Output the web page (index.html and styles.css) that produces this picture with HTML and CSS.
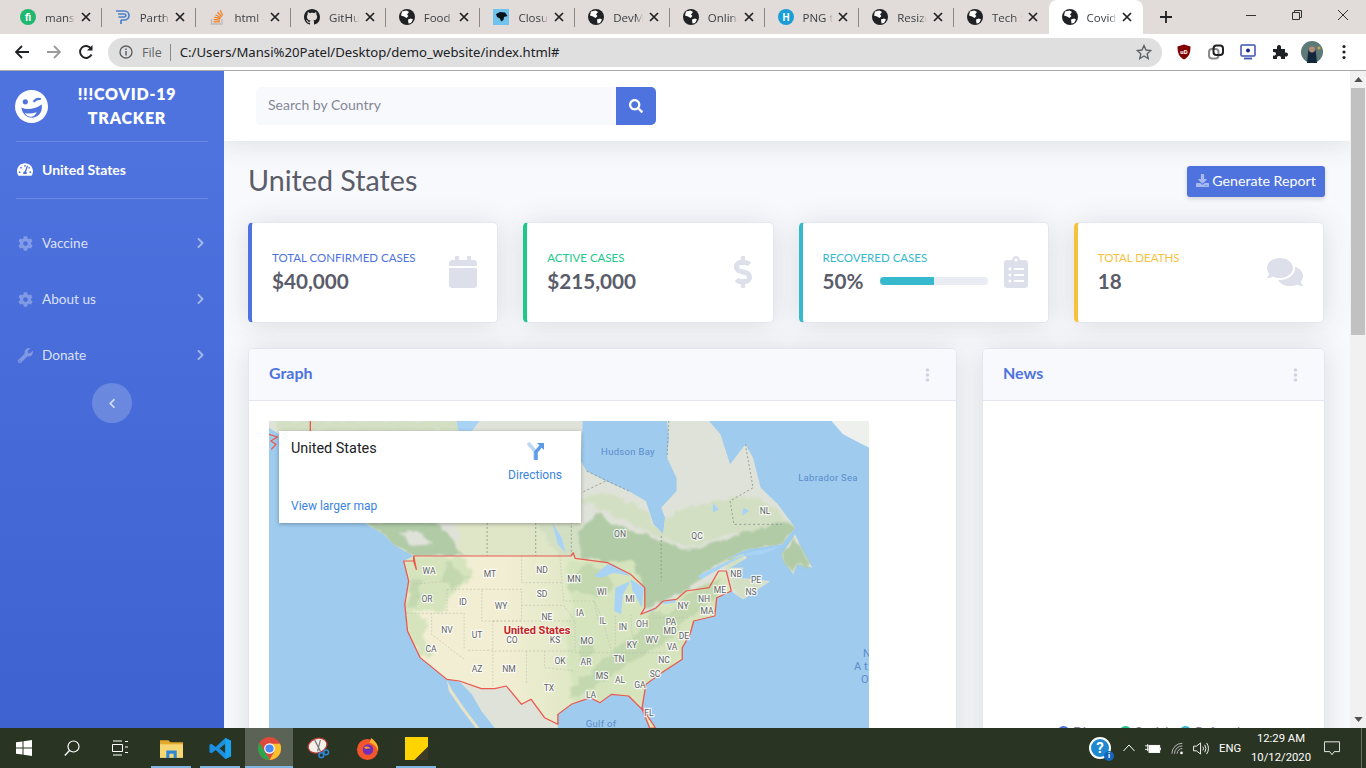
FILE: index.html
```html
<!DOCTYPE html>
<html lang="en">
<head>
<meta charset="utf-8">
<title>Covid-19 Tracker</title>
<link rel="stylesheet" href="styles.css">
</head>
<body>
<svg class="defs" aria-hidden="true">
  <symbol id="globe" viewBox="0 0 16 16"><circle cx="8" cy="8" r="8" fill="#202124"/><path d="M3 2.5 7.5 1.5 10 3 8 5.5 9.5 7 7.5 9 5 7.5 2 6.5ZM9 10.500 12 9.500 14 10.500 12 14 9.500 14.500Z" fill="#fff"/></symbol>
  <symbol id="x" viewBox="0 0 10 10"><path d="M1 1 9 9M9 1 1 9" stroke="#202124" stroke-width="1.700" fill="none"/></symbol>
  <symbol id="cog" viewBox="0 0 512 512"><path d="M487.4 315.7l-42.6-24.6c4.3-23.2 4.3-47 0-70.2l42.6-24.6c4.9-2.8 7.1-8.6 5.500-14-11.100-35.600-30-67.800-54.700-94.600-3.800-4.100-10-5.100-14.800-2.300L380.800 110c-17.900-15.400-38.500-27.300-60.800-35.100V25.800c0-5.600-3.900-10.500-9.400-11.700-36.700-8.200-74.300-7.800-109.200 0-5.500 1.200-9.400 6.100-9.400 11.700V75c-22.200 7.900-42.800 19.800-60.800 35.100L88.700 85.500c-4.900-2.800-11-1.900-14.800 2.300-24.700 26.700-43.600 58.900-54.700 94.600-1.700 5.400.6 11.200 5.500 14L67.300 221c-4.300 23.200-4.300 47 0 70.200l-42.600 24.600c-4.900 2.800-7.100 8.600-5.500 14 11.100 35.600 30 67.800 54.700 94.600 3.800 4.100 10 5.100 14.800 2.300l42.600-24.600c17.900 15.400 38.500 27.300 60.800 35.100v49.200c0 5.600 3.900 10.500 9.400 11.700 36.700 8.200 74.300 7.800 109.200 0 5.500-1.200 9.400-6.100 9.400-11.700v-49.200c22.200-7.900 42.800-19.800 60.800-35.100l42.600 24.600c4.900 2.800 11 1.900 14.800-2.300 24.700-26.700 43.600-58.900 54.700-94.600 1.500-5.500-.7-11.300-5.600-14.100zM256 336c-44.100 0-80-35.900-80-80s35.900-80 80-80 80 35.900 80 80-35.900 80-80 80z"/></symbol>
  <symbol id="chev" viewBox="0 0 320 512"><path d="M285.476 272.971L91.132 467.314c-9.373 9.373-24.569 9.373-33.941 0l-22.667-22.667c-9.357-9.357-9.375-24.522-.04-33.901L188.505 256 34.484 101.255c-9.335-9.379-9.317-24.544.04-33.901l22.667-22.667c9.373-9.373 24.569-9.373 33.941 0L285.475 239.030c9.373 9.372 9.373 24.568.001 33.941z"/></symbol>
  <symbol id="kebab" viewBox="0 0 4 14"><circle cx="2" cy="2" r="1.800"/><circle cx="2" cy="7" r="1.800"/><circle cx="2" cy="12" r="1.800"/></symbol>
</svg>

<header class="tabstrip">
  <div class="tab"><svg class="fav" viewBox="0 0 16 16"><circle cx="8" cy="8" r="8" fill="#1fb871"/><text x="8" y="12" class="fav-text" text-anchor="middle">fi</text></svg><span class="tab-title">mansipatel</span><svg class="tab-x"><use href="#x"/></svg></div>
  <div class="tab"><svg class="fav" viewBox="0 0 16 16"><path d="M1 2H9.500A4.500 4.500 0 0 1 9.500 11H6M3 5H9.300A1.500 1.500 0 0 1 9.300 8H3.500M6 11V15" fill="none" stroke="#4c82c9" stroke-width="1.700"/></svg><span class="tab-title">Parth Patel</span><svg class="tab-x"><use href="#x"/></svg></div>
  <div class="tab"><svg class="fav" viewBox="0 0 16 16"><path d="M2.500 10V15H13V10" fill="none" stroke="#bcbbbb" stroke-width="1.400"/><path d="M4.500 12.800H11M4.700 10.500 11 11.200M5.300 8.200 11.300 9.600M6.500 5.800 12 8.700M8.500 3.300 12.800 7.700M11 1.300 13.800 6.500" stroke="#f48024" stroke-width="1.300" fill="none"/></svg><span class="tab-title">html - Stack Overflow</span><svg class="tab-x"><use href="#x"/></svg></div>
  <div class="tab"><svg class="fav" viewBox="0 0 16 16"><path fill="#202124" d="M8 0C3.580 0 0 3.580 0 8c0 3.540 2.290 6.530 5.470 7.590.4.07.55-.17.55-.38 0-.19-.01-.82-.01-1.490-2.010.37-2.530-.49-2.690-.94-.09-.23-.48-.94-.82-1.130-.28-.15-.68-.52-.01-.53.63-.01 1.080.58 1.230.82.72 1.210 1.870.87 2.330.66.07-.52.28-.87.51-1.070-1.780-.2-3.640-.89-3.640-3.950 0-.87.31-1.590.82-2.150-.08-.2-.36-1.020.08-2.120 0 0 .67-.21 2.200.82.64-.18 1.320-.27 2-.27.68 0 1.360.09 2 .27 1.530-1.040 2.200-.82 2.200-.82.44 1.100.16 1.920.08 2.120.51.56.82 1.270.82 2.150 0 3.070-1.870 3.750-3.650 3.950.29.25.54.73.54 1.480 0 1.070-.01 1.930-.01 2.200 0 .21.15.46.55.38A8.013 8.013 0 0016 8c0-4.420-3.580-8-8-8z"/></svg><span class="tab-title">GitHub</span><svg class="tab-x"><use href="#x"/></svg></div>
  <div class="tab"><svg class="fav"><use href="#globe"/></svg><span class="tab-title">Food Delivery</span><svg class="tab-x"><use href="#x"/></svg></div>
  <div class="tab"><svg class="fav" viewBox="0 0 16 16"><rect width="16" height="16" fill="#6fc3ec"/><path d="M3 5 7 3 12 3.500 14.500 7 11 8 10.500 11 8 12.500 7 9.500 4 8Z" fill="#06121c"/></svg><span class="tab-title">Closures</span><svg class="tab-x"><use href="#x"/></svg></div>
  <div class="tab"><svg class="fav"><use href="#globe"/></svg><span class="tab-title">DevMountain</span><svg class="tab-x"><use href="#x"/></svg></div>
  <div class="tab"><svg class="fav"><use href="#globe"/></svg><span class="tab-title">Online Converter</span><svg class="tab-x"><use href="#x"/></svg></div>
  <div class="tab"><svg class="fav" viewBox="0 0 16 16"><circle cx="8" cy="8" r="8" fill="#1b9ed8"/><text x="8" y="11.500" class="fav-text" text-anchor="middle">H</text></svg><span class="tab-title">PNG to ICO</span><svg class="tab-x"><use href="#x"/></svg></div>
  <div class="tab"><svg class="fav"><use href="#globe"/></svg><span class="tab-title">Resize Image</span><svg class="tab-x"><use href="#x"/></svg></div>
  <div class="tab tab-before-active"><svg class="fav"><use href="#globe"/></svg><span class="tab-title">Tech Stack</span><svg class="tab-x"><use href="#x"/></svg></div>
  <div class="tab tab-active"><svg class="fav"><use href="#globe"/></svg><span class="tab-title">Covid-19</span><svg class="tab-x"><use href="#x"/></svg></div>
  <svg class="newtab" viewBox="0 0 12 12"><path d="M6 0V12M0 6H12" stroke="#202124" stroke-width="1.800"/></svg>
  <div class="winctl">
    <div class="winbtn"><svg class="winicon" viewBox="0 0 10 10"><path d="M0 5.500H10" stroke="#333" fill="none"/></svg></div>
    <div class="winbtn"><svg class="winicon" viewBox="0 0 10 10"><path d="M.5 2.500H7.500V9.500H.5ZM2.500 2.500V.5H9.500V7.500H7.500" stroke="#333" fill="none"/></svg></div>
    <div class="winbtn"><svg class="winicon" viewBox="0 0 10 10"><path d="M0 0 10 10M10 0 0 10" stroke="#333" fill="none"/></svg></div>
  </div>
</header>

<nav class="toolbar">
  <svg class="tool first" viewBox="0 0 16 16"><path d="M15 8H2M8 2 2 8 8 14" fill="none" stroke="#202124" stroke-width="1.800"/></svg>
  <svg class="tool" viewBox="0 0 16 16"><path d="M1 8H14M8 2 14 8 8 14" fill="none" stroke="#9b9b9b" stroke-width="1.800"/></svg>
  <svg class="tool" viewBox="0 0 16 16"><path d="M13.500 10.500A6 6 0 1 1 13 4.500" fill="none" stroke="#202124" stroke-width="1.900"/><path d="M14.500 1V6.500H9Z" fill="#202124"/></svg>
  <div class="omnibox">
    <svg class="info" viewBox="0 0 14 14"><circle cx="7" cy="7" r="6" fill="none" stroke="#5f6368" stroke-width="1.400"/><path d="M7 6V10.500M7 3.500V5" stroke="#5f6368" stroke-width="1.500"/></svg>
    <span class="scheme">File</span><span class="omni-sep"></span>
    <span class="url">C:/Users/Mansi%20Patel/Desktop/demo_website/index.html#</span>
    <svg class="star" viewBox="0 0 16 16"><path d="M8 1.500 10 6 14.800 6.500 11.200 9.700 12.200 14.500 8 12 3.800 14.500 4.800 9.700 1.200 6.500 6 6Z" fill="none" stroke="#5f6368" stroke-width="1.400"/></svg>
  </div>
  <div class="exts">
    <svg class="ext" viewBox="0 0 16 16"><path d="M8 .5 14.500 2.500C14.500 9 13 13 8 15.500 3 13 1.500 9 1.500 2.500Z" fill="#800000"/><text x="8" y="9.500" class="ub-text" text-anchor="middle">uD</text></svg>
    <svg class="ext" viewBox="0 0 16 16"><rect x="1" y="5" width="9.500" height="9.500" rx="3" fill="none" stroke="#8a8a8a" stroke-width="2"/><rect x="5.500" y="1.500" width="9.500" height="9.500" rx="3" fill="none" stroke="#202124" stroke-width="2"/></svg>
    <svg class="ext" viewBox="0 0 16 16"><rect x="1" y="1" width="14" height="11" rx="1" fill="#fff" stroke="#3f51b5" stroke-width="1.500"/><circle cx="8" cy="6.500" r="2" fill="#1a237e"/><path d="M4 14.500H12" stroke="#3f51b5" stroke-width="1.800"/></svg>
    <svg class="ext" viewBox="0 0 16 16"><path d="M1 5H5C4.500 2 5.500 1 7 1S9.500 2 9 5H13V8.500C15.500 8 16 9.500 16 10.500S15.500 13 13 12.500V15H9C9.500 13 8.500 12 7 12S4.500 13 5 15H1V11.500C3 12 4 11 4 9.800S3 7.500 1 8Z" fill="#202124"/></svg>
    <svg class="avatar" viewBox="0 0 22 22"><circle cx="11" cy="11" r="11" fill="#5d7a78"/><path d="M6 22 7 12C7 5 15 5 15 12L16 22Z" fill="#13263d"/><circle cx="11" cy="8.500" r="3" fill="#b58e78"/><circle cx="18" cy="7" r="1.500" fill="#d3a648"/></svg>
    <svg class="ext" viewBox="0 0 16 16"><circle cx="8" cy="2.500" r="1.600" fill="#202124"/><circle cx="8" cy="8" r="1.600" fill="#202124"/><circle cx="8" cy="13.500" r="1.600" fill="#202124"/></svg>
  </div>
</nav>

<div class="app">
  <aside class="sidebar">
    <div class="brand">
      <svg class="logo" viewBox="0 0 32 32">
        <circle cx="16" cy="16" r="16" fill="#fff"/>
        <circle cx="10" cy="11.500" r="2.500" fill="#4e73df"/>
        <path d="M18 11.500 Q21 7.500 25 9" fill="none" stroke="#4e73df" stroke-width="2"/>
        <path d="M6 17 Q15 21 26 14 Q27 25 17 27 Q8 27 6 17Z" fill="#4e73df"/>
        <path d="M9.500 22 Q14 24 21 21.500 Q19 26 15.500 26 Q11.500 26 9.500 22Z" fill="#fff"/>
      </svg>
      <div class="brand-text">!!!COVID-19 TRACKER</div>
    </div>
    <hr class="side-hr">
    <a class="side-item active">
      <svg class="side-icon" viewBox="0 0 576 512"><path d="M288 32C128.940 32 0 160.940 0 320c0 52.800 14.250 102.260 39.060 144.800 5.610 9.620 16.300 15.200 27.440 15.200h443c11.140 0 21.830-5.580 27.440-15.200C561.750 422.260 576 372.800 576 320c0-159.060-128.940-288-288-288zm0 64c14.710 0 26.580 10.130 30.320 23.650-1.110 2.260-2.640 4.230-3.450 6.670l-9.220 27.670c-5.130 3.490-10.970 6.010-17.640 6.010-17.670 0-32-14.330-32-32S270.330 96 288 96zM96 384c-17.670 0-32-14.330-32-32s14.330-32 32-32 32 14.330 32 32-14.330 32-32 32zm48-160c-17.670 0-32-14.330-32-32s14.330-32 32-32 32 14.330 32 32-14.330 32-32 32zm246.770-72.410l-61.330 184C343.130 347.330 352 364.540 352 384c0 11.720-3.380 22.550-8.880 32H232.880c-5.500-9.450-8.880-20.280-8.880-32 0-33.940 26.500-61.430 59.900-63.590l61.340-184.010c4.170-12.560 17.730-19.450 30.360-15.170 12.570 4.190 19.350 17.790 15.170 30.360zm14.660 57.200l15.520-46.550c3.470-1.290 7.130-2.230 11.050-2.230 17.670 0 32 14.330 32 32s-14.330 32-32 32c-11.380-.01-20.890-6.280-26.570-15.220zM480 384c-17.670 0-32-14.330-32-32s14.330-32 32-32 32 14.330 32 32-14.330 32-32 32z"/></svg>
      <span>United States</span>
    </a>
    <hr class="side-hr">
    <div class="side-group">
      <a class="side-item"><svg class="side-icon"><use href="#cog"/></svg><span>Vaccine</span><svg class="side-chev"><use href="#chev"/></svg></a>
      <a class="side-item"><svg class="side-icon"><use href="#cog"/></svg><span>About us</span><svg class="side-chev"><use href="#chev"/></svg></a>
      <a class="side-item"><svg class="side-icon" viewBox="0 0 512 512"><path d="M507.730 109.100c-2.240-9.030-13.540-12.090-20.120-5.510l-74.360 74.360-67.880-11.310-11.310-67.880 74.360-74.360c6.620-6.620 3.430-17.900-5.660-20.160-47.380-11.740-99.550.91-136.580 37.930-39.640 39.640-50.550 97.100-34.050 147.200L18.740 402.760c-24.990 24.990-24.990 65.510 0 90.500 24.990 24.990 65.510 24.990 90.500 0l213.210-213.210c50.120 16.710 107.470 5.680 147.370-34.220 37.070-37.070 49.700-89.320 37.910-136.730zM64 472c-13.250 0-24-10.750-24-24 0-13.260 10.750-24 24-24s24 10.740 24 24c0 13.250-10.750 24-24 24z"/></svg><span>Donate</span><svg class="side-chev"><use href="#chev"/></svg></a>
    </div>
    <div class="toggle"><svg class="toggle-chev" viewBox="0 0 320 512"><path d="M34.520 239.030 228.870 44.690c9.370-9.370 24.570-9.370 33.940 0l22.670 22.670c9.360 9.360 9.380 24.520.04 33.900L131.490 256l154.020 154.750c9.340 9.380 9.320 24.540-.04 33.900l-22.670 22.670c-9.370 9.370-24.570 9.370-33.940 0L34.520 272.970c-9.370-9.370-9.370-24.570 0-33.940z"/></svg></div>
  </aside>

  <main class="content">
    <div class="topbar">
      <div class="search">
        <div class="search-input">Search by Country</div>
        <div class="search-btn"><svg class="search-icon" viewBox="0 0 512 512"><path d="M505 442.700L405.300 343c-4.500-4.500-10.600-7-17-7H372c27.600-35.300 44-79.700 44-128C416 93.100 322.900 0 208 0S0 93.100 0 208s93.100 208 208 208c48.300 0 92.700-16.400 128-44v16.300c0 6.400 2.500 12.500 7 17l99.700 99.700c9.400 9.400 24.600 9.400 33.900 0l28.300-28.300c9.400-9.400 9.400-24.600.1-34zM208 336c-70.700 0-128-57.200-128-128 0-70.700 57.200-128 128-128 70.700 0 128 57.200 128 128 0 70.700-57.200 128-128 128z"/></svg></div>
      </div>
    </div>
    <div class="page">
      <div class="page-head">
        <h1 class="page-title">United States</h1>
        <a class="report-btn"><svg class="dl-icon" viewBox="0 0 512 512"><path d="M216 0h80c13.300 0 24 10.700 24 24v168h87.700c17.800 0 26.700 21.500 14.100 34.100L269.700 378.300c-7.500 7.500-19.800 7.500-27.300 0L90.100 226.100c-12.600-12.600-3.700-34.100 14.100-34.100H192V24c0-13.300 10.700-24 24-24zm296 376v112c0 13.300-10.700 24-24 24H24c-13.300 0-24-10.700-24-24V376c0-13.300 10.700-24 24-24h146.700l49 49c20.100 20.100 52.500 20.100 72.600 0l49-49H488c13.300 0 24 10.700 24 24zm-124 88c0-11-9-20-20-20s-20 9-20 20 9 20 20 20 20-9 20-20zm64 0c0-11-9-20-20-20s-20 9-20 20 9 20 20 20 20-9 20-20z"/></svg>Generate Report</a>
      </div>

      <div class="stats">
        <div class="stat stat-primary">
          <div class="stat-body"><div class="stat-label">Total Confirmed Cases</div><div class="stat-value">$40,000</div></div>
          <svg class="stat-icon" viewBox="0 0 448 512"><path d="M12 192h424c6.600 0 12 5.400 12 12v260c0 26.500-21.500 48-48 48H48c-26.500 0-48-21.500-48-48V204c0-6.600 5.400-12 12-12zm436-44v-36c0-26.500-21.500-48-48-48h-48V12c0-6.600-5.400-12-12-12h-40c-6.600 0-12 5.400-12 12v52H160V12c0-6.600-5.400-12-12-12h-40c-6.600 0-12 5.400-12 12v52H48C21.500 64 0 85.500 0 112v36c0 6.600 5.400 12 12 12h424c6.600 0 12-5.400 12-12z"/></svg>
        </div>
        <div class="stat stat-success">
          <div class="stat-body"><div class="stat-label">Active Cases</div><div class="stat-value">$215,000</div></div>
          <svg class="stat-icon icon-dollar" viewBox="0 0 288 512"><path d="M209.200 233.400l-108-31.600C88.700 198.200 80 186.500 80 173.500c0-16.300 13.200-29.500 29.500-29.500h66.300c12.200 0 24.200 3.700 34.200 10.500 6.100 4.100 14.300 3.100 19.500-2l34.800-34c7.100-6.900 6.100-18.400-1.800-24.500C238 74.800 207.400 64.100 176 64V16c0-8.800-7.200-16-16-16h-32c-8.800 0-16 7.200-16 16v48h-2.500C45.800 64-5.400 118.700.5 183.600c4.200 46.100 39.400 83.600 83.800 96.600l102.500 30c12.500 3.700 21.200 15.300 21.200 28.300 0 16.300-13.200 29.500-29.500 29.500h-66.300C100 368 88 364.300 78 357.500c-6.100-4.100-14.300-3.100-19.500 2l-34.800 34c-7.100 6.900-6.100 18.400 1.800 24.500 24.500 19.200 55.100 29.900 86.500 30v48c0 8.800 7.200 16 16 16h32c8.800 0 16-7.200 16-16v-48.200c46.600-.9 90.300-28.600 105.700-72.700 21.500-61.600-14.600-124.800-72.500-141.700z"/></svg>
        </div>
        <div class="stat stat-info">
          <div class="stat-body">
            <div class="stat-label">Recovered Cases</div>
            <div class="stat-row"><div class="stat-value">50%</div><div class="progress"><div class="progress-fill"></div></div></div>
          </div>
          <svg class="stat-icon icon-clip" viewBox="0 0 384 512"><path d="M336 64h-80c0-35.300-28.700-64-64-64s-64 28.700-64 64H48C21.500 64 0 85.500 0 112v352c0 26.500 21.500 48 48 48h288c26.500 0 48-21.500 48-48V112c0-26.500-21.500-48-48-48zM96 424c-13.300 0-24-10.700-24-24s10.700-24 24-24 24 10.700 24 24-10.700 24-24 24zm0-96c-13.300 0-24-10.700-24-24s10.700-24 24-24 24 10.700 24 24-10.700 24-24 24zm0-96c-13.300 0-24-10.700-24-24s10.700-24 24-24 24 10.700 24 24-10.700 24-24 24zm96-192c13.300 0 24 10.700 24 24s-10.700 24-24 24-24-10.700-24-24 10.700-24 24-24zm128 368c0 4.400-3.600 8-8 8H168c-4.400 0-8-3.600-8-8v-16c0-4.400 3.600-8 8-8h144c4.400 0 8 3.600 8 8v16zm0-96c0 4.400-3.600 8-8 8H168c-4.400 0-8-3.600-8-8v-16c0-4.400 3.600-8 8-8h144c4.400 0 8 3.600 8 8v16zm0-96c0 4.400-3.600 8-8 8H168c-4.400 0-8-3.600-8-8v-16c0-4.400 3.600-8 8-8h144c4.400 0 8 3.600 8 8v16z"/></svg>
        </div>
        <div class="stat stat-warning">
          <div class="stat-body"><div class="stat-label">Total Deaths</div><div class="stat-value">18</div></div>
          <svg class="stat-icon icon-comments" viewBox="0 0 576 512"><path d="M416 192c0-88.400-93.100-160-208-160S0 103.600 0 192c0 34.300 14.100 65.900 38 92-13.400 30.200-35.500 54.200-35.800 54.500-2.200 2.300-2.800 5.700-1.500 8.700S4.800 352 8 352c36.600 0 66.900-12.300 88.700-25 32.200 15.700 70.300 25 111.300 25 114.900 0 208-71.600 208-160zm122 220c23.900-26 38-57.700 38-92 0-66.900-53.500-124.200-129.300-148.100.9 6.600 1.300 13.300 1.300 20.100 0 105.900-107.700 192-240 192-10.800 0-21.300-.8-31.700-1.900C207.800 439.600 281.800 480 368 480c41 0 79.100-9.200 111.300-25 21.800 12.700 52.100 25 88.700 25 3.200 0 6.100-1.900 7.300-4.800 1.300-2.900.7-6.300-1.500-8.700-.3-.3-22.400-24.200-35.800-54.500z"/></svg>
        </div>
      </div>

      <div class="panels">
        <section class="panel">
          <div class="panel-head"><h2 class="panel-title">Graph</h2><svg class="panel-kebab"><use href="#kebab"/></svg></div>
          <div class="panel-body">
            <div class="map">
              <svg class="map-svg" viewBox="269 421 600 450">
                <defs>
                  <linearGradient id="usfill" gradientUnits="userSpaceOnUse" x1="620" y1="0" x2="830" y2="0"><stop offset="0" stop-color="#f1eed3"/><stop offset="1" stop-color="#dce7c3"/></linearGradient>
                  <filter id="soft" x="-5%" y="-5%" width="110%" height="110%">
                    <feTurbulence type="fractalNoise" baseFrequency=".035" numOctaves="3" seed="4" result="n"/>
                    <feDisplacementMap in="SourceGraphic" in2="n" scale="26" xChannelSelector="R" yChannelSelector="G" result="d"/>
                    <feGaussianBlur in="d" stdDeviation="2.500"/>
                  </filter>
                  <clipPath id="landclip"><path d="M0 0H820L815 120 830 150 880 180 940 210 985 240 1005 310 1030 340 1035 290 1025 260 1065 210 1065 170 1040 110 1045 50 1040 0H1150L1180 40 1205 130 1245 70 1265 110 1285 200 1330 250 1375 320 1340 370 1250 385 1190 415 1240 400 1250 410 1205 440 1240 440 1225 470 1310 480 1240 535 1225 525 1208 510 1170 530 1165 585 1110 600 1100 640 1080 680 1080 715 1020 760 985 790 975 860 1010 921H995L975 865 940 825 895 820 865 845 840 830 790 850 755 880 755 921H590L555 870 530 820 498 782 465 775 395 710 362 630 355 550 365 480 352 420 378 405 330 375 300 340 250 306 100 200 26 40 0 20Z"/></clipPath>
                </defs>
                <rect class="water" x="269" y="421" width="600" height="450"/>
                <g transform="translate(269 421) scale(.38265 .33333)">
                  <path class="land-n" d="M0 0H820L815 120 830 150 880 180 940 210 985 240 1005 310 1030 340 1035 290 1025 260 1065 210 1065 170 1040 110 1045 50 1040 0H1150L1180 40 1205 130 1245 70 1265 110 1285 200 1330 250 1375 320 1340 370 1250 385 1190 415 1240 400 1250 410 1205 440 1240 440 1225 470 1310 480 1240 535 1225 525 1208 510 1170 530 1165 585 1110 600 1100 640 1080 680 1080 715 1020 760 985 790 975 860 1010 921H995L975 865 940 825 895 820 865 845 840 830 790 850 755 880 755 921H590L555 870 530 820 498 782 465 775 395 710 362 630 355 550 365 480 352 420 378 405 330 375 300 340 250 306 100 200 26 40 0 20Z"/>
                  <path class="land-mx" d="M465 778 480 810 510 860 550 921H540L500 860 470 810Z"/>
                  <path class="land-n" d="M1340 400 1375 340 1395 390 1420 440 1380 430 1370 460 1345 420Z"/>
                  <path class="land-ice" d="M1470 0 1500 40 1568 80V0Z"/>
                  <g clip-path="url(#landclip)">
                    <g filter="url(#soft)">
                      <path class="land-g3" d="M810 240 880 210 985 270 1010 320 1040 300 1065 270 1200 230 1285 230 1375 320 1200 340 1100 380 1005 340 860 260Z"/>
                      <path class="land-g" d="M790 350 860 270 920 320 1005 350 1100 390 1200 350 1340 300 1380 320 1340 375 1250 390 1150 445 1090 510 1030 540 970 570 945 460 885 425 800 405Z"/>
                      <path class="land-p" d="M490 300H800V410H500Z"/>
                      <path class="land-g3" d="M700 300H810V410H760Z"/>
                      <path class="land-g" d="M250 300H440L510 405H378L330 375Z"/>
                      <path class="land-n" d="M340 330 400 340 430 370 370 375Z"/>
                      <path class="land-g3" d="M20 0H500V30H20Z"/>
                      <path class="land-g3" d="M1190 415 1250 400 1240 440 1205 450 1225 470 1310 480 1240 535 1208 500 1200 450Z"/>
                    </g>
                  </g>
                  <path class="land-g" d="M1340 400 1375 345 1395 390 1418 438 1380 428 1370 455 1345 420Z" filter="url(#soft)"/>
                  <path class="us-fill" d="M378 405H790L795 395 800 412 885 425 945 460 982 500 982 560 972 580 1010 562 1030 540 1065 535 1090 510 1150 500 1175 450 1195 450 1208 510 1170 530 1165 585 1110 600 1100 640 1080 680 1080 715 1020 760 985 790 975 860 1010 921H995L975 865 940 825 895 820 865 845 840 830 790 850 755 880 755 910 720 890 685 835 660 850 620 795 590 803 555 803 498 780 465 775 395 710 362 630 355 550 365 480 352 420 378 420Z"/>
                  <g clip-path="url(#landclip)">
                    <g filter="url(#soft)">
                      <path class="land-gl" d="M378 408 510 408 530 470 480 520 460 570 370 570 420 610 400 640 430 700 395 710 362 630 355 550 365 480 352 420ZM780 420H950L980 500 975 580 1090 520 1200 470 1170 590 1100 650 1060 730 1000 780 975 860 940 825 800 850 780 700 790 560Z"/>
                      <path class="land-g2" d="M460 420 520 470 480 510 455 480ZM1000 570 1090 590 1060 650 980 700 900 760 870 790 790 830 790 800 850 740 900 690 960 640ZM810 650 850 660 840 720 810 720ZM820 430 880 440 900 510 850 530 780 500ZM1090 520 1180 470 1170 530 1110 590 1040 590ZM370 480 400 470 390 560 362 560Z"/>
                    </g>
                  </g>
                  <path class="state" d="M375 490 465 480M465 505V577M360 577H510M425 577V640L510 715M510 577V688M465 505H556M556 505H660V600H556ZM660 405V485M660 485H770M660 553H770L800 600M585 600H800V690H585M585 600V800M673 690V790M720 690V740L800 750M760 405 770 540H850L870 590 895 690M905 585V670M945 580 950 650M800 695H1040M1010 590H1100M520 688H585M850 540 860 600"/>
                  <path class="border-ca" d="M570 306V405M697 306V405M790 230V405M790 230 880 180M830 150 940 210M1025 345V480M1245 70 1265 200 1205 240 1215 310 1340 310M1045 0 1040 110"/>
                  <path class="lake" d="M490 0H550L530 30H495ZM740 306 765 350 775 395 755 370ZM850 465 885 430 900 430 945 465 900 455 870 470ZM905 500 945 480 925 520 920 580 902 570ZM945 475 980 500 975 560 950 510ZM972 580 1010 560 1030 545 1005 570ZM1030 540 1065 535 1060 545 1030 550ZM1160 245 1175 265 1160 275ZM1240 260 1255 270 1235 285ZM1120 465 1190 425 1260 392 1340 375 1290 400 1240 405 1190 435 1130 475Z"/>
                  <path class="us-line" d="M378 405H790L795 395 800 412 885 425 945 460 982 500 982 560 972 580 1010 562 1030 540 1065 535 1090 510 1150 500 1175 450 1195 450 1208 510 1170 530 1165 585 1110 600 1100 640 1080 680 1080 715 1020 760 985 790 975 860 1010 921H995L975 865 940 825 895 820 865 845 840 830 790 850 755 880 755 910 720 890 685 835 660 850 620 795 590 803 555 803 498 780 465 775 395 710 362 630 355 550 365 480 352 420 378 420Z"/>
                  <path class="us-line" d="M378 405 385 445 378 420M108 0V30M0 40 22 48 5 60 18 70 6 85"/>
                </g>
                <g class="labels" transform="translate(0 3)">
                  <text x="429" y="571">WA</text><text x="490" y="574">MT</text><text x="542" y="570">ND</text><text x="574" y="579">MN</text><text x="542" y="594">SD</text><text x="602" y="592">WI</text><text x="427" y="599">OR</text><text x="463" y="602">ID</text><text x="501" y="606">WY</text><text x="547" y="617">NE</text><text x="580" y="613">IA</text><text x="630" y="599">MI</text><text x="603" y="621">IL</text><text x="623" y="627">IN</text><text x="642" y="624">OH</text><text x="671" y="622">PA</text><text x="683" y="606">NY</text><text x="704" y="599">NH</text><text x="720" y="590">ME</text><text x="707" y="611">MA</text><text x="736" y="574">NB</text><text x="756" y="580">PE</text><text x="751" y="592">NS</text><text x="670" y="631">MD</text><text x="684" y="636">DE</text><text x="447" y="630">NV</text><text x="477" y="635">UT</text><text x="512" y="640">CO</text><text x="555" y="640">KS</text><text x="587" y="641">MO</text><text x="632" y="645">KY</text><text x="652" y="640">WV</text><text x="672" y="647">VA</text><text x="431" y="649">CA</text><text x="619" y="659">TN</text><text x="664" y="660">NC</text><text x="560" y="661">OK</text><text x="586" y="662">AR</text><text x="655" y="674">SC</text><text x="602" y="676">MS</text><text x="620" y="680">AL</text><text x="640" y="685">GA</text><text x="477" y="669">AZ</text><text x="509" y="669">NM</text><text x="549" y="688">TX</text><text x="591" y="695">LA</text><text x="649" y="713">FL</text><text x="620" y="534">ON</text><text x="697" y="536">QC</text><text x="765" y="511">NL</text>
                </g>
                <text class="country" x="537" y="634">United States</text>
                <g class="seas">
                  <text x="628" y="455">Hudson Bay</text>
                  <text x="828" y="481">Labrador Sea</text>
                  <text x="601" y="727">Gulf of</text>
                  <text x="601" y="739">Mexico</text>
                </g>
                <g class="ocean">
                  <text x="863" y="657">North</text>
                  <text x="854" y="670">Atlantic</text>
                  <text x="861" y="683">Ocean</text>
                </g>
              </svg>
              <div class="map-card">
                <div class="map-card-main">
                  <div class="map-card-title">United States</div>
                  <a class="map-link map-larger">View larger map</a>
                </div>
                <a class="map-link map-dir">
                  <svg class="dir-icon" viewBox="0 0 20 20"><path d="M3 2 10 10V19" fill="none" stroke="#bcd6f5" stroke-width="3.500"/><path d="M11 19V11L16 5" fill="none" stroke="#5b9be8" stroke-width="3.500"/><path d="M12 2H19V9Z" fill="#5b9be8"/></svg>
                  <span>Directions</span>
                </a>
              </div>
            </div>
          </div>
        </section>
        <section class="panel">
          <div class="panel-head"><h2 class="panel-title">News</h2><svg class="panel-kebab"><use href="#kebab"/></svg></div>
          <div class="panel-body">
            <div class="news-chart"></div>
            <div class="legend">
              <span class="legend-item"><i class="dot dot-primary"></i>Direct</span>
              <span class="legend-item"><i class="dot dot-success"></i>Social</span>
              <span class="legend-item"><i class="dot dot-info"></i>Referral</span>
            </div>
          </div>
        </section>
      </div>
    </div>
  </main>

  <div class="scrollbar">
    <svg class="sb-arrow" viewBox="0 0 10 6"><path d="M5 0 10 6H0Z"/></svg>
    <div class="sb-thumb"></div>
    <svg class="sb-arrow sb-down" viewBox="0 0 10 6"><path d="M5 6 0 0H10Z"/></svg>
  </div>
</div>

<footer class="taskbar">
  <div class="tb-cell"><svg class="tb-icon-s" viewBox="0 0 16 16"><path d="M0 2.300 6.500 1.400V7.500H0ZM7.500 1.300 16 0V7.500H7.500ZM0 8.500H6.500V14.600L0 13.700ZM7.500 8.500H16V16L7.500 14.700Z" fill="#fff"/></svg></div>
  <div class="tb-cell"><svg class="tb-icon-s" viewBox="0 0 16 16"><circle cx="9.500" cy="6.500" r="5.500" fill="none" stroke="#fff" stroke-width="1.200"/><path d="M5.500 10.500 .8 15.500" stroke="#fff" stroke-width="1.400"/></svg></div>
  <div class="tb-cell"><svg class="tb-icon-s" viewBox="0 0 16 16"><path d="M.5 4.500H10.500V11.500H.5ZM1 1H10M1 15H10M13 1.500H16M13 7H16M13 12.500H16" fill="none" stroke="#fff"/></svg></div>
  <div class="tb-apps">
    <div class="tb-app running"><svg class="tb-icon" viewBox="0 0 22 22"><path d="M0 3H8L10 5H22V9H0Z" fill="#e3a82c"/><path d="M0 7H22V20H0Z" fill="#f7d774"/><path d="M6 13H16V20H13V16H9V20H6Z" fill="#2f88d6"/></svg></div>
    <div class="tb-app running"><svg class="tb-icon" viewBox="0 0 24 24"><path d="M17 1 23 4V20L17 23 7 13.500 2.500 17 .5 16V8L2.500 7 7 10.500ZM17 7 11 12 17 17Z" fill="#1d8fe0"/><path d="M17 1 23 4V20L17 23Z" fill="#1aa3ef"/></svg></div>
    <div class="tb-app running current"><svg class="tb-icon" viewBox="0 0 24 24"><circle cx="12" cy="12" r="12" fill="#dd4a3d"/><path d="M12 24A12 12 0 0 1 1.600 6L7 15.500 12.500 24Z" fill="#2ea44f"/><path d="M12 7H23A12 12 0 0 1 12 24L17 15.500Z" fill="#fbc02d"/><circle cx="12" cy="12" r="5.500" fill="#fff"/><circle cx="12" cy="12" r="4.300" fill="#4a8af4"/></svg></div>
    <div class="tb-app"><svg class="tb-icon" viewBox="0 0 24 24"><ellipse cx="11" cy="9" rx="10" ry="7.500" fill="#f4efe9" stroke="#b93b36" stroke-width="1.300" transform="rotate(-20 11 9)"/><path d="M8 3 14 15M14 3 11 15" stroke="#777" stroke-width="1.200"/><circle cx="15" cy="19" r="2.500" fill="none" stroke="#2f88d6" stroke-width="1.600"/><circle cx="20" cy="16" r="2.500" fill="none" stroke="#2f88d6" stroke-width="1.600"/></svg></div>
    <div class="tb-app"><svg class="tb-icon" viewBox="0 0 24 24"><circle cx="12" cy="13" r="11" fill="#f3562c"/><path d="M16 1C22 6 24 10 23 15 21 8 17 7 14 6Z" fill="#ffb32c"/><circle cx="12.500" cy="13" r="5.500" fill="#6f2fb6"/><path d="M8 11C11 9 14 10 15 12 12 12 10 13 8 11Z" fill="#ff9a2c"/></svg></div>
    <div class="tb-app running"><svg class="tb-icon" viewBox="0 0 22 22"><rect width="22" height="22" fill="#ffd400"/><path d="M22 9V22H9Z" fill="#3d3a28"/></svg></div>
  </div>
  <div class="tray">
    <div class="help"><span class="help-q">?</span><span class="help-i">i</span></div>
    <svg class="tray-icon caret" viewBox="0 0 12 8"><path d="M.5 7 6 1 11.500 7" fill="none" stroke="#fff"/></svg>
    <svg class="tray-icon batt" viewBox="0 0 18 12"><path d="M0 3H4M0 7H4M3 1V9" stroke="#fff" fill="none"/><rect x="4.500" y="2.500" width="12" height="8" fill="#fff" stroke="#fff"/><path d="M17.500 5V8" stroke="#fff"/></svg>
    <svg class="tray-icon wifi" viewBox="0 0 16 14"><path d="M1 13A12 12 0 0 1 13 1M4 13A9 9 0 0 1 13 4M7 13A6 6 0 0 1 13 7" fill="none" stroke="#bbb" stroke-width="1.100"/><circle cx="12" cy="12" r="1.500" fill="#fff"/></svg>
    <svg class="tray-icon vol" viewBox="0 0 18 14"><path d="M.5 4.500H3.500L8 1V13L3.500 9.500H.5Z" fill="none" stroke="#fff"/><path d="M10.500 5Q12 7 10.500 9M12.500 3Q15 7 12.500 11M14.500 1Q18.500 7 14.500 13" fill="none" stroke="#fff"/></svg>
    <span class="lang">ENG</span>
    <div class="clock"><span>12:29 AM</span><span>10/12/2020</span></div>
    <svg class="tray-icon notif" viewBox="0 0 18 16"><path d="M.5 .5H17.500V11.500H11.500L9 15 6.500 11.500H.5Z" fill="none" stroke="#fff"/></svg>
    <div class="show-desktop"></div>
  </div>
</footer>
</body>
</html>
```

FILE: styles.css
```css
* { box-sizing: border-box; }
html, body { margin: 0; height: 768px; width: 1366px; overflow: hidden; }
body { display: flex; flex-direction: column; font-family: Lato, "Open Sans", sans-serif; color: #858796; background: #fff; }
.defs { width: 0; height: 0; position: absolute; }

/* browser chrome */
.tabstrip { height: 34px; background: #e1dbd9; display: flex; align-items: center; padding-left: 7px; flex: none; font-family: "Open Sans", sans-serif; }
.tab { width: 94.7px; height: 34px; display: flex; align-items: center; padding: 0 9px 0 13px; position: relative; }
.tab::after { content: ""; position: absolute; right: 0; top: 8px; height: 19px; width: 1px; background: #8d8887; }
.tab-before-active::after, .tab-active::after { display: none; }
.tab-active { background: #fff; border-radius: 8px 8px 0 0; }
.fav { width: 16px; height: 16px; flex: none; margin-right: 9px; }
.fav-text { fill: #fff; font: 700 10px Roboto, sans-serif; }
.tab-title { width: 30px; flex: none; overflow: hidden; white-space: nowrap; font-size: 11.5px; color: #3c4043; -webkit-mask-image: linear-gradient(90deg, #000 75%, transparent); mask-image: linear-gradient(90deg, #000 75%, transparent); }
.tab-x { width: 10px; height: 10px; flex: none; margin-left: auto; margin-right: 2px; }
.newtab { width: 12px; height: 12px; margin-left: 17px; flex: none; }
.winctl { margin-left: auto; display: flex; height: 34px; }
.winbtn { width: 46px; height: 34px; display: flex; align-items: center; justify-content: center; padding-bottom: 4px; }
.winicon { width: 10px; height: 10px; }

.toolbar { height: 37px; background: #fff; display: flex; align-items: center; flex: none; border-bottom: 1px solid #a8a8a8; padding-left: 14px; font-family: "Open Sans", sans-serif; }
.tool { width: 16px; height: 16px; flex: none; margin-right: 16px; }
.omnibox { width: 1054px; height: 29px; margin-left: -2px; border-radius: 15px; background: #dfdfdf; display: flex; align-items: center; padding-left: 11px; flex: none; }
.info { width: 14px; height: 14px; flex: none; }
.scheme { font-size: 12.5px; color: #5f6368; margin-left: 9px; }
.omni-sep { width: 1px; height: 17px; background: #8a8a8a; margin: 0 9px 0 8px; }
.url { font-family: "Noto Sans", sans-serif; font-size: 13.15px; color: #202124; white-space: nowrap; }
.star { width: 16px; height: 16px; margin-left: auto; margin-right: 10px; }
.exts { display: flex; align-items: center; margin-left: 14px; }
.ext { width: 16px; height: 16px; flex: none; margin-right: 16px; }
.avatar { width: 22px; height: 22px; flex: none; margin: 0 13px 0 -3px; }
.ub-text { fill: #fff; font: 700 6px Roboto, sans-serif; }

/* layout */
.app { flex: 1; display: flex; min-height: 0; overflow: hidden; }
.sidebar { width: 224px; flex: none; background: linear-gradient(180deg, #4e73df 10%, #3e62d0 100%); display: flex; flex-direction: column; }
.brand { height: 70px; display: flex; align-items: center; padding-left: 15px; flex: none; }
.logo { width: 33px; height: 33px; flex: none; }
.brand-text { flex: 1; margin: 0 32px 0 14px; color: #fff; font-weight: 800; font-size: 16px; line-height: 24px; letter-spacing: .8px; text-align: center; }
.side-hr { margin: 0 16px; border: 0; border-top: 1px solid rgba(255, 255, 255, .17); flex: none; }
.side-item { height: 56px; display: flex; align-items: center; padding: 0 19px 0 18px; color: rgba(255, 255, 255, .8); font-size: 13.6px; flex: none; }
.side-item.active { color: #fff; font-weight: 700; font-size: 14px; height: 56px; padding-bottom: 2px; }
.side-icon { width: 15px; height: 15px; fill: rgba(255, 255, 255, .3); flex: none; margin-right: 9px; }
.side-item.active .side-icon { fill: #fff; width: 16px; margin-left: -1px; }
.side-chev { width: 9px; height: 12px; margin-left: auto; fill: rgba(255, 255, 255, .5); }
.side-group { margin-top: 16px; }
.toggle { width: 40px; height: 40px; border-radius: 50%; background: rgba(255, 255, 255, .2); margin: 0 auto; display: flex; align-items: center; justify-content: center; flex: none; }
.toggle-chev { width: 8px; height: 11px; fill: rgba(255, 255, 255, .7); }

.content { flex: 1; min-width: 0; background: #f8f9fc; overflow: hidden; }
.topbar { height: 70px; background: #fff; box-shadow: 0 2px 28px rgba(58, 59, 69, .15); display: flex; align-items: center; padding-left: 32px; position: relative; }
.search { display: flex; height: 38px; }
.search-input { width: 360px; background: #f8f9fc; border-radius: 5px 0 0 5px; font-size: 14px; color: #858796; display: flex; align-items: center; padding: 0 0 3px 12px; }
.search-btn { width: 40px; background: #4e73df; border-radius: 0 5px 5px 0; display: flex; align-items: center; justify-content: center; }
.search-icon { width: 14px; height: 14px; fill: #fff; }

.page { padding: 25px 25px 0 24px; }
.page-head { display: flex; justify-content: space-between; align-items: center; height: 31px; margin-bottom: 25px; }
.page-title { margin: 0 0 4px; font-size: 28.7px; font-weight: 400; color: #5a5c69; }
.report-btn { width: 138px; height: 31px; background: #4e73df; border-radius: 3px; color: #fff; font-size: 14.2px; display: flex; align-items: center; justify-content: center; padding-bottom: 2px; box-shadow: 0 2px 4px rgba(58, 59, 69, .2); }
.dl-icon { width: 13px; height: 13px; fill: rgba(255, 255, 255, .5); margin-right: 3px; }

.stats { display: grid; grid-template-columns: repeat(4, 1fr); gap: 25px; margin: 0 1px 25px 0; }
.stat { height: 101px; background: #fff; border: 1px solid #e3e6f0; border-left-width: 4px; border-radius: 5px; box-shadow: 0 2px 28px rgba(58, 59, 69, .15); display: flex; align-items: center; justify-content: space-between; padding: 0 20px 2px 20px; }
.stat-primary { border-left-color: #4e73df; }
.stat-success { border-left-color: #1cc88a; }
.stat-info { border-left-color: #36b9cc; }
.stat-warning { border-left-color: #f6c23e; }
.stat-body { flex: 1; min-width: 0; }
.stat-label { font-size: 11.5px; text-transform: uppercase; line-height: 14px; margin-bottom: 4px; }
.stat-primary .stat-label { color: #4e73df; }
.stat-success .stat-label { color: #1cc88a; }
.stat-info .stat-label { color: #36b9cc; }
.stat-warning .stat-label { color: #f6c23e; }
.stat-value { font-size: 20.7px; font-weight: 700; color: #5a5c69; line-height: 24px; }
.stat-row { display: flex; align-items: center; }
.progress { width: 108px; height: 8px; border-radius: 4px; background: #eaecf4; margin-left: 17px; overflow: hidden; }
.progress-fill { width: 50%; height: 100%; background: #36b9cc; }
.stat-icon { height: 32px; width: 28px; fill: #dddfeb; flex: none; }
.icon-dollar { width: 20px; }
.icon-clip { width: 24px; }
.icon-comments { width: 36px; }

.panels { display: grid; grid-template-columns: 709px 1fr; gap: 25px; }
.panel { background: #fff; border: 1px solid #e3e6f0; border-radius: 5px; box-shadow: 0 2px 28px rgba(58, 59, 69, .15); overflow: hidden; }
.panel-head { height: 52px; background: #f8f9fc; border-bottom: 1px solid #e3e6f0; display: flex; align-items: center; justify-content: space-between; padding: 0 26px 4px 20px; }
.panel-title { margin: 0; font-size: 16px; font-weight: 700; color: #4e73df; }
.panel-kebab { width: 5px; height: 14px; fill: #d1d3e2; margin-top: 4px; }
.panel-body { padding: 20px; }

.map { width: 600px; height: 450px; position: relative; overflow: hidden; }
.map-svg { display: block; width: 600px; height: 450px; }
.water { fill: #9ecbee; }
.land-n { fill: #dfe2d8; }
.land-mx { fill: #e6e3c8; }
.land-ice { fill: #eef0ee; }
.land-p { fill: #dfe5c7; }
.land-g { fill: #b0cba6; }
.land-g3 { fill: #d3dfc3; }
.land-gl { fill: #d6e4bd; }
.land-g2 { fill: #c3d8ae; }
.lake { fill: #a8d3f4; }
.us-fill { fill: url(#usfill); }
.us-line { fill: none; stroke: #ea5a50; stroke-width: 3.500; stroke-linejoin: round; }
.state { fill: none; stroke: #b9b9ac; stroke-width: 1.600; stroke-dasharray: 5 5; }
.border-ca { fill: none; stroke: #8f9a90; stroke-width: 2.500; stroke-dasharray: 6 6; }
.labels text { font: 400 8.500px Roboto, sans-serif; fill: #5f6368; text-anchor: middle; stroke: rgba(255, 255, 255, .75); stroke-width: 2.500px; paint-order: stroke; stroke-linejoin: round; }
.country { font: 700 11px Roboto, sans-serif; fill: #c5221f; text-anchor: middle; stroke: rgba(255, 255, 255, .7); stroke-width: 1.500px; paint-order: stroke; }
.seas text { font: 400 9.500px Roboto, sans-serif; fill: #5c8ccb; text-anchor: middle; letter-spacing: .3px; }
.ocean text { font: 400 11px Roboto, sans-serif; fill: #5c8ccb; letter-spacing: 3px; }

.map-card { position: absolute; left: 10px; top: 10px; width: 302px; height: 92px; background: #fff; box-shadow: 0 1px 4px rgba(0, 0, 0, .3); display: flex; justify-content: space-between; font-family: Roboto, sans-serif; padding: 10px 19px 0 12px; }
.map-card-main { display: flex; flex-direction: column; justify-content: space-between; height: 72px; }
.map-card-title { font-size: 14.400px; font-weight: 400; color: #202124; line-height: 16px; }
.map-link { font-size: 12px; color: #3a84df; line-height: 14px; }
.map-dir { display: flex; flex-direction: column; align-items: center; gap: 7px; }
.dir-icon { width: 20px; height: 20px; }

.news-chart { height: 303px; }
.legend { display: flex; justify-content: center; gap: 11px; padding-right: 10px; font-size: 13px; line-height: 16px; }
.legend-item { display: flex; align-items: center; gap: 3px; }
.dot { width: 13px; height: 13px; border-radius: 50%; }
.dot-primary { background: #4e73df; }
.dot-success { background: #1cc88a; }
.dot-info { background: #36b9cc; }

.scrollbar { width: 16px; flex: none; background: #f1f1f1; display: flex; flex-direction: column; align-items: center; position: relative; }
.sb-arrow { width: 9px; height: 5px; fill: #505050; margin-top: 6px; flex: none; }
.sb-thumb { width: 14px; height: 247px; margin-top: 6px; background: #c1c1c1; flex: none; }
.sb-down { margin-top: auto; margin-bottom: 6px; }

/* taskbar */
.taskbar { height: 40px; flex: none; background: #2a3422; display: flex; align-items: center; }
.tb-cell { width: 48px; height: 40px; display: flex; align-items: center; justify-content: center; flex: none; }
.tb-icon-s { width: 16px; height: 16px; }
.tb-apps { display: flex; margin-left: 3px; gap: 1px; }
.tb-app { width: 48px; height: 40px; display: flex; align-items: center; justify-content: center; position: relative; }
.tb-app.running::after { content: ""; position: absolute; left: 4px; right: 4px; bottom: 0; height: 2px; background: #7fb5e0; }
.tb-app.current { background: #5a6355; }
.tb-app.current::after { left: 0; right: 0; }
.tb-icon { width: 23px; height: 23px; }
.tray { margin-left: auto; display: flex; align-items: center; color: #fff; height: 40px; }
.help { width: 22px; height: 22px; border-radius: 50%; background: #1e88d0; border: 2px solid #fff; position: relative; display: flex; align-items: center; justify-content: center; margin-right: 12px; }
.help-q { font: 700 15px Roboto, sans-serif; color: #fff; }
.help-i { position: absolute; right: -5px; bottom: -4px; width: 10px; height: 10px; border-radius: 50%; background: #1565c0; color: #fff; font: 700 8px/10px Roboto, sans-serif; text-align: center; }
.tray-icon { flex: none; }
.caret { width: 12px; height: 8px; margin-right: 10px; }
.batt { width: 16px; height: 11px; margin-right: 10px; }
.wifi { width: 14px; height: 13px; margin-right: 7.500px; }
.vol { width: 17px; height: 13px; margin-right: 9.500px; }
.lang { font: 400 11.300px Roboto, sans-serif; width: 23px; margin-right: 3px; white-space: nowrap; }
.clock { width: 72px; display: flex; flex-direction: column; align-items: center; font: 400 11.300px/19px Roboto, sans-serif; margin-right: 7px; }
.notif { width: 16px; height: 15px; margin-right: 21px; }
.show-desktop { width: 1px; height: 40px; background: #6b7066; margin-right: 4px; }
```
